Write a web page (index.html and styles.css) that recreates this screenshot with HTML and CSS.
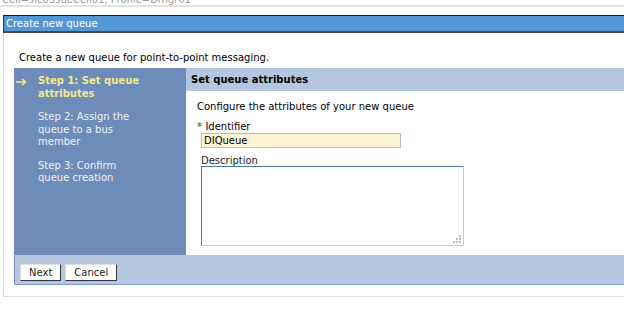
FILE: index.html
```html
<!DOCTYPE html>
<html>
<head>
<meta charset="utf-8">
<link rel="stylesheet" href="styles.css">
</head>
<body>
<div class="crumb"><span>Cell=sic03sueCell01, Profile=Dmgr01</span></div>
<div class="portlet">
  <div class="title">Create new queue</div>
  <div class="pbody">
    <p class="intro">Create a new queue for point-to-point messaging.</p>
    <div class="wizard">
      <div class="steps">
        <div class="step current">
          <svg class="arrow" width="11" height="8" viewBox="0 0 11 8"><path d="M0 4H9M6 1L9.5 4L6 7" fill="none" stroke="#f3e98a" stroke-width="1.6"/></svg>
          <span>Step 1: Set queue attributes</span>
        </div>
        <div class="step"><span>Step 2: Assign the queue to a bus member</span></div>
        <div class="step"><span>Step 3: Confirm queue creation</span></div>
      </div>
      <div class="main">
        <div class="mhead">Set queue attributes</div>
        <div class="mbody">
          <p class="lead">Configure the attributes of your new queue</p>
          <div class="label"><span class="req">*</span> Identifier</div>
          <div class="input">DIQueue</div>
          <div class="label2">Description</div>
          <div class="textarea"><svg class="grip" width="9" height="9" viewBox="0 0 9 9"><g fill="#bbb"><rect x="7" y="1" width="2" height="2"/><rect x="4" y="4" width="2" height="2"/><rect x="7" y="4" width="2" height="2"/><rect x="1" y="7" width="2" height="2"/><rect x="4" y="7" width="2" height="2"/><rect x="7" y="7" width="2" height="2"/></g></svg></div>
        </div>
      </div>
    </div>
    <div class="buttons">
      <span class="btn">Next</span><span class="btn">Cancel</span>
    </div>
  </div>
</div>
</body>
</html>
```
FILE: styles.css
```css
html, body { margin: 0; padding: 0; background: #fff; }
body { font-family: "DejaVu Sans", Verdana, sans-serif; font-size: 10px; color: #000; width: 624px; overflow: hidden; }
.crumb { height: 5px; overflow: hidden; border-bottom: 2px solid #e2e2e2; color: #9a9a9a; padding-left: 2px; }
.crumb span { display: block; margin-top: -6px; line-height: 11px; }
.portlet { margin: 8px 0 0 3px; width: 640px; border-left: 1px solid #d6d6d6; border-bottom: 1px solid #dcdcdc; }
.title { height: 15px; line-height: 15px; background: #5497d5; color: #fff; border-top: 1px solid #1a1a1a; border-bottom: 2px solid #4a4a4a; padding-left: 2px; margin-left: -1px; border-left: 1px solid #333; }
.pbody { padding: 0 0 11px 10px; }
.intro { margin: 0; padding: 18px 0 0 5px; height: 17px; line-height: 13px; }
.wizard { display: flex; height: 187px; }
.steps { width: 172px; background: #6e8cb9; padding-top: 7px; box-sizing: border-box; }
.step { position: relative; padding: 0 36px 0 24px; color: #eef1f8; line-height: 12.5px; margin-bottom: 11px; }
.step.current { color: #f3e98a; font-weight: bold; }
.arrow { position: absolute; left: 2px; top: 3px; }
.main { flex: 1; }
.mhead { height: 23px; line-height: 23px; background: #b5c6e0; font-weight: bold; font-size: 10px; padding-left: 5px; }
.mbody { padding: 10px 0 0 11px; }
.lead { margin: 0; line-height: 12px; }
.label { margin-top: 8px; line-height: 12px; }
.req { color: #8a7a2a; font-weight: bold; }
.input { margin: 0 0 0 4px; width: 196px; height: 13px; line-height: 13px; background: #fdf4d6; border: 1px solid #a6bcd8; padding-left: 2px; box-sizing: content-box; }
.label2 { margin: 7px 0 0 4px; line-height: 11px; color: #222; }
.textarea { position: relative; margin: 0 0 0 4px; width: 261px; height: 78px; border: 1px solid #4a79ad; border-right-color: #b8cce4; border-bottom-color: #b8cce4; background: #fff; }
.grip { position: absolute; right: 2px; bottom: 2px; }
.buttons { height: 30px; background: #b5c6e0; border-left: 1px solid #6e8cb9; border-bottom: 1px solid #7f9ccb; padding: 9px 0 0 5px; box-sizing: border-box; display: flex; gap: 4px; align-items: flex-start; }
.btn { display: inline-block; height: 17px; line-height: 16px; background: #fff; border: 1px solid #e0e0e0; border-right-color: #333; border-bottom-color: #333; padding: 0 8px; box-sizing: border-box; color: #222; }
```
